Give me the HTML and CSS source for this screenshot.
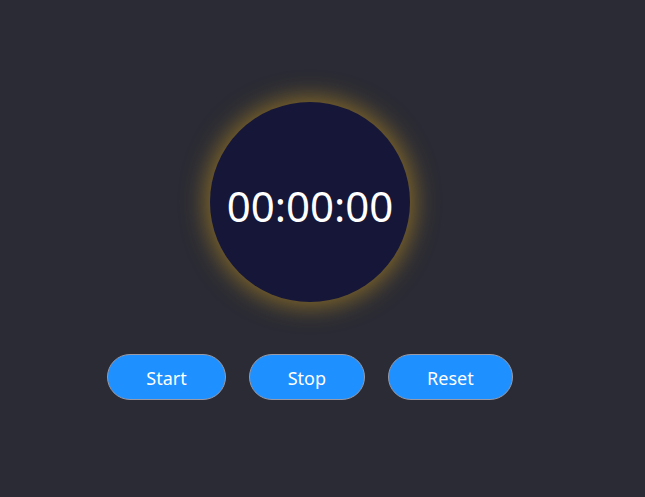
FILE: index.html
```html
<!DOCTYPE html>
<html>
<head>
<meta charset="utf-8">
<link rel="stylesheet" href="styles.css">
</head>
<body>
<div class="app">
  <div class="dial"><span class="time">00:00:00</span></div>
  <div class="controls">
    <button class="btn">Start</button>
    <button class="btn">Stop</button>
    <button class="btn">Reset</button>
  </div>
</div>
</body>
</html>
```
FILE: styles.css
```css
html, body {
  margin: 0;
  padding: 0;
  background: #2a2b34;
  height: 100%;
}
.app {
  width: 620px;
  display: flex;
  flex-direction: column;
  align-items: center;
  padding-top: 102px;
  font-family: "Noto Sans", sans-serif;
}
.dial {
  width: 200px;
  height: 200px;
  border-radius: 50%;
  background: #151638;
  box-shadow: 0 0 24px 4px rgba(214, 160, 30, 0.55);
  display: flex;
  align-items: center;
  justify-content: center;
}
.time {
  color: #ffffff;
  font-size: 42px;
  line-height: 1;
  margin-top: 7px;
}
.controls {
  margin-top: 52px;
  display: flex;
  gap: 23px;
}
.btn {
  font-family: "Noto Sans", sans-serif;
  font-size: 18px;
  color: #ffffff;
  background: #1e90ff;
  border: 1px solid #9a9aa6;
  border-radius: 24px;
  height: 46px;
  padding: 1px 38px 0;
}
```
